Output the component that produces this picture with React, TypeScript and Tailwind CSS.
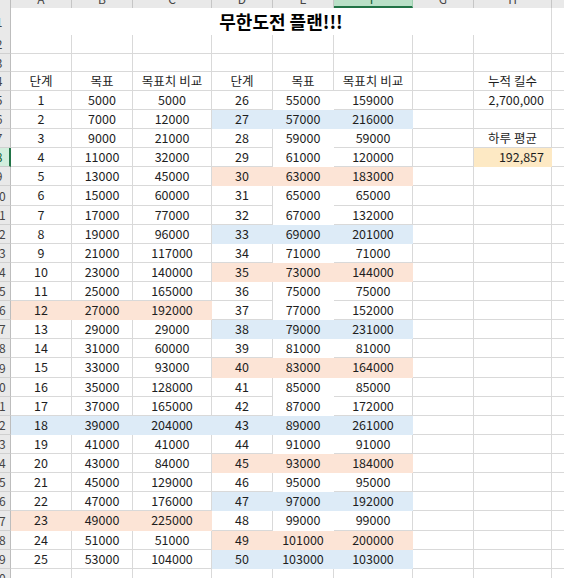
import React from "react";

const GRID = "grid grid-cols-[11px_61px_61px_79px_61px_61px_79px_61px_78px_40px]";
const FONT = { fontFamily: '"Noto Sans CJK KR", "Noto Sans", sans-serif' };

const leftCmp = [5000, 12000, 21000, 32000, 45000, 60000, 77000, 96000, 117000, 140000, 165000, 192000, 29000, 60000, 93000, 128000, 165000, 204000, 41000, 84000, 129000, 176000, 225000, 51000, 104000];
const rightCmp = [159000, 216000, 59000, 120000, 183000, 65000, 132000, 201000, 71000, 144000, 75000, 152000, 231000, 81000, 164000, 85000, 172000, 261000, 91000, 184000, 95000, 192000, 99000, 200000, 103000];
const leftFill: Record<number, "o" | "b"> = { 11: "o", 17: "b", 22: "o" };
const rightFill: Record<number, "o" | "b"> = { 1: "b", 4: "o", 7: "b", 9: "o", 12: "b", 14: "o", 17: "b", 19: "o", 21: "b", 23: "o", 24: "b" };

type Fill = "o" | "b" | "y" | "w" | undefined;

function Cell({ children, fill, align = "center", className = "" }: { children?: React.ReactNode; fill?: Fill; align?: "center" | "right"; className?: string }) {
  const bg =
    fill === "o"
      ? "bg-[#fce4d6] border-[#fce4d6]"
      : fill === "b"
      ? "bg-[#ddebf7] border-[#ddebf7]"
      : fill === "y"
      ? "bg-[#fde9c4] border-[#fde9c4]"
      : fill === "w"
      ? "bg-white border-white"
      : "bg-white border-[#d9d9d9]";
  return (
    <div
      className={`flex items-center overflow-hidden whitespace-nowrap border-r border-b text-[12.5px] text-[#1e1e1e] ${bg} ${
        align === "center" ? "justify-center" : "justify-end pr-[7px]"
      } ${className}`}
    >
      {children}
    </div>
  );
}

function RowHead({ n, active }: { n: number; active?: boolean }) {
  return (
    <div
      className={`overflow-hidden border-b ${
        active ? "bg-[#d2eedd] border-r-2 border-r-[#217346] border-b-[#c9c9c9]" : "bg-[#e9e9e9] border-r border-r-[#bdbdbd] border-b-[#d0d0d0]"
      } flex items-center`}
    >
      <div className={`ml-[-13px] w-[24px] shrink-0 text-center text-[12px] ${active ? "text-[#0e5c2f]" : "text-[#444]"}`}>{n}</div>
    </div>
  );
}

function Row({ n, h, children, active }: { n: number; h: string; children: React.ReactNode; active?: boolean }) {
  return (
    <div className={`${GRID} ${h}`}>
      <RowHead n={n} active={active} />
      {children}
    </div>
  );
}

export default function App() {
  const letters = ["A", "B", "C", "D", "E", "F", "G", "H", "I"];
  const dataRows = Array.from({ length: 25 }, (_, i) => i);
  return (
    <div className="w-[564px] h-[578px] overflow-hidden bg-white" style={FONT}>
      {/* column header */}
      <div className={`${GRID} h-[8px]`}>
        <div className="bg-[#e9e9e9] border-r border-[#bdbdbd]" />
        {letters.map((l) => (
          <div
            key={l}
            className={`overflow-hidden border-r ${
              l === "F" ? "bg-[#b9e0c7] border-[#9ccfae] border-b-2 border-b-[#217346] text-[#0e5c2f]" : "bg-[#e9e9e9] border-[#c6c6c6] text-[#444]"
            }`}
          >
            <div className="mt-[-10px] h-[18px] text-center text-[12px] leading-[18px]">{l}</div>
          </div>
        ))}
      </div>

      {/* Row 1: title */}
      <div className={`${GRID} h-[27px]`}>
        <RowHead n={1} />
        <div className="col-span-8 flex items-center justify-center border-r border-b border-[#d9d9d9] text-[18px] font-bold text-black">
          무한도전 플랜!!!
        </div>
        <Cell />
      </div>

      {/* Rows 2,3 */}
      {[2, 3].map((r) => (
        <Row key={r} n={r} h={r === 2 ? "h-[19px]" : "h-[18px]"}>
          {Array.from({ length: 9 }, (_, k) => (
            <Cell key={k} />
          ))}
        </Row>
      ))}

      {/* Row 4 headers */}
      <Row n={4} h="h-[19px]">
        <Cell>단계</Cell>
        <Cell>목표</Cell>
        <Cell>목표치 비교</Cell>
        <Cell>단계</Cell>
        <Cell>목표</Cell>
        <Cell>목표치 비교</Cell>
        <Cell />
        <Cell>누적 킬수</Cell>
        <Cell />
      </Row>

      {dataRows.map((i) => {
        const r = i + 5;
        const lf = leftFill[i];
        const rf = rightFill[i];
        const h = r === 10 || r === 19 || r === 27 ? "h-[20px]" : "h-[19px]";
        let hCell: React.ReactNode = <Cell />;
        if (r === 5) hCell = <Cell align="right">2,700,000</Cell>;
        if (r === 7) hCell = <Cell>하루 평균</Cell>;
        if (r === 8)
          hCell = (
            <Cell align="right" fill="y">
              192,857
            </Cell>
          );
        return (
          <Row key={r} n={r} h={h} active={r === 8}>
            <Cell fill={lf}>{i + 1}</Cell>
            <Cell fill={lf}>{5000 + 2000 * i}</Cell>
            <Cell fill={lf}>{leftCmp[i]}</Cell>
            <Cell fill={rf}>{26 + i}</Cell>
            <Cell fill={rf ?? "w"}>{55000 + 2000 * i}</Cell>
            <Cell fill={rf}>{rightCmp[i]}</Cell>
            <Cell />
            {hCell}
            <Cell />
          </Row>
        );
      })}

      <Row n={30} h="h-[19px]">
        {Array.from({ length: 9 }, (_, k) => (
          <Cell key={k} />
        ))}
      </Row>
    </div>
  );
}
